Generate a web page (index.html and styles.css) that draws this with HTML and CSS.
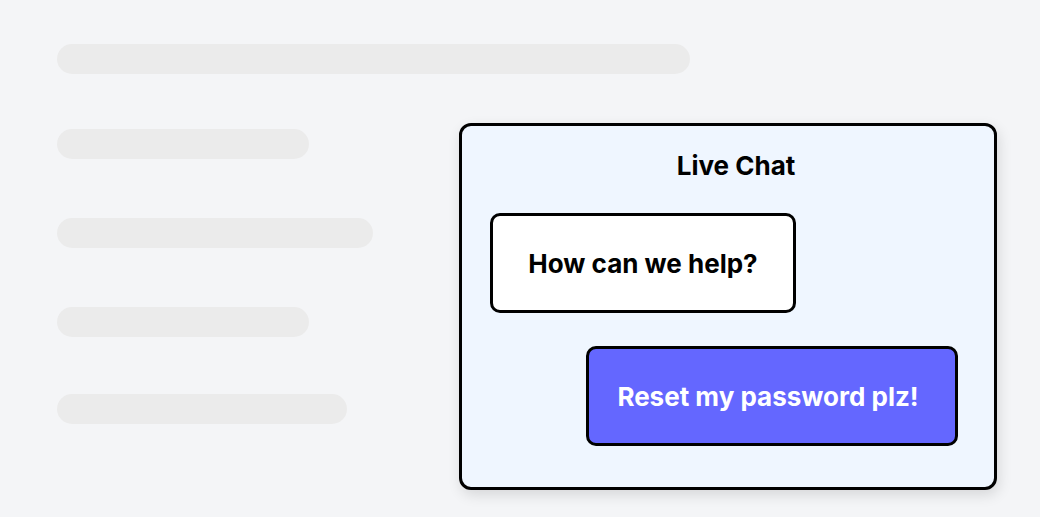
FILE: index.html
```html
<html lang="en">
<head>
  <meta charset="UTF-8" />
  <meta name="viewport" content="width=device-width, initial-scale=1.0" />
  <title>Live Chat</title>
  <link rel="stylesheet" href="styles.css">
</head>
<body>
  <div class="page">
    <div class="bar bar-wide"></div>

    <div class="row">
      <div class="bars">
        <div class="bar bar-a"></div>
        <div class="bar bar-b"></div>
        <div class="bar bar-c"></div>
        <div class="bar bar-d"></div>
      </div>

      <div class="chat">
        <h2 class="chat-title">Live Chat</h2>
        <div class="bubble bubble-agent">How can we help?</div>
        <div class="bubble bubble-user">Reset my password plz!</div>
      </div>
    </div>
  </div>
</body>
</html>
```

FILE: styles.css
```css
:root {
  --page-bg: #f4f5f7;
  --bar-bg: #ebebeb;
  --panel-bg: #eff6ff;
  --accent: #6467ff;
  --ink: #000000;
}

body {
  margin: 0;
  background: var(--page-bg);
  font-family: Inter, "Noto Sans", Arial, sans-serif;
  color: var(--ink);
}

.page {
  padding: 44px 43px 0 57px;
}

/* skeleton lines */
.bar {
  height: 30px;
  border-radius: 15px;
  background: var(--bar-bg);
}
.bar-wide { width: 633px; }
.bar-a { width: 252px; }
.bar-b { width: 316px; margin-top: 59px; }
.bar-c { width: 252px; margin-top: 59px; }
.bar-d { width: 290px; margin-top: 57px; }

.row {
  display: flex;
  justify-content: space-between;
  align-items: flex-start;
  margin-top: 49px;
}

.bars {
  padding-top: 6px;
}

/* chat panel */
.chat {
  width: 532px;
  box-sizing: content-box;
  border: 3px solid var(--ink);
  border-radius: 12px;
  background: var(--panel-bg);
  box-shadow: 2px 5px 14px rgba(0, 0, 0, 0.12);
  padding: 25px 0 41px 0;
  display: flex;
  flex-direction: column;
}

.chat-title {
  margin: 0 0 32px 0;
  padding-left: 16px;
  font-size: 26px;
  line-height: 30px;
  font-weight: 700;
  text-align: center;
}

.bubble {
  height: 100px;
  box-sizing: border-box;
  border: 3px solid var(--ink);
  border-radius: 10px;
  display: flex;
  align-items: center;
  justify-content: center;
  font-size: 26px;
  font-weight: 700;
}

.bubble-agent {
  align-self: flex-start;
  margin-left: 28px;
  width: 306px;
  background: #ffffff;
}

.bubble-user {
  align-self: flex-end;
  margin: 33px 36px 0 0;
  padding-right: 8px;
  width: 372px;
  background: var(--accent);
  color: #ffffff;
}
```
